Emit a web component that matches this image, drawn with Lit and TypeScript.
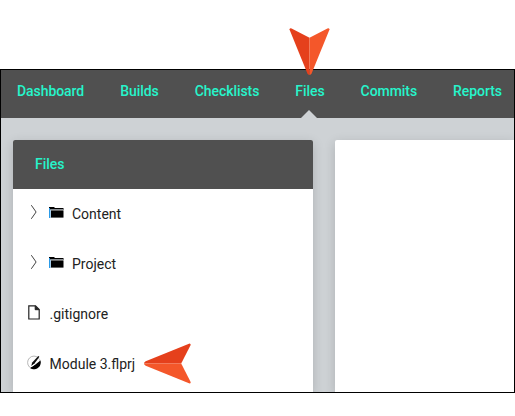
import { LitElement, html, css, svg, nothing } from "lit";
import { customElement } from "lit/decorators.js";

const TABS = ["Dashboard", "Builds", "Checklists", "Files", "Commits", "Reports"];

const ROWS = [
  { name: "Content", kind: "folder" },
  { name: "Project", kind: "folder" },
  { name: ".gitignore", kind: "file" },
  { name: "Module 3.flprj", kind: "project" },
];

const chevron = html`<svg class="chevron" width="8" height="16" viewBox="0 0 8 16">
  <path d="M1.3 1.2 L6.1 8 L1.3 14.8" fill="none" stroke="#444" stroke-width="1" />
</svg>`;

const icons: Record<string, unknown> = {
  folder: html`<svg class="folder" width="15" height="11" viewBox="0 0 15 11">
    <path d="M0 0H5L6 1H14.5V3H0Z" fill="#000" />
    <path d="M1.5 2.5H14.5" stroke="#8a8f94" stroke-width="1" />
    <rect x="0" y="1" width="1" height="10" fill="#2b9be8" />
    <rect x="1" y="2.5" width="1" height="8.5" fill="#a8cdea" />
    <rect x="2" y="3.4" width="12.5" height="7.2" fill="#000" />
  </svg>`,
  file: html`<svg class="file" width="12" height="15" viewBox="0 0 12 15">
    <path d="M0.8 0.8H7.5L11.2 4.5V14H0.8Z" fill="none" stroke="#222" stroke-width="1.2" />
    <path d="M7.2 0.8V4.7H11.2" fill="#222" stroke="#222" stroke-width="1" />
  </svg>`,
  project: html`<svg class="project" width="14" height="15" viewBox="0 0 14 15">
    <circle cx="7" cy="7.5" r="6.4" fill="#fff" stroke="#999" stroke-width="0.7" />
    <path d="M13.4 5.6A6.7 6.7 0 0 1 3 12.9L8.4 9.4Z" fill="#000" />
    <path d="M4.2 10.9L5.2 7.6L11.3 0.9L12.4 1.8L7.6 8.6Z" fill="#111" />
    <path d="M3.4 12.2L7.9 9.2L12.9 3.2" fill="none" stroke="#fff" stroke-width="0.9" />
  </svg>`,
};

const pointer = svg`
  <path d="M0.5 1.4Q0.9 -0.2 2.6 0.6L20.5 9.8V47Q19 47 18.3 45.3Z" fill="#e5401c" />
  <path d="M40.5 1.4Q40.1 -0.2 38.4 0.6L20.5 9.8V47Q22 47 22.7 45.3Z" fill="#f4572a" />`;

@customElement("app-root")
export class AppRoot extends LitElement {
  static styles = css`
    :host {
      display: block;
      position: relative;
      box-sizing: border-box;
      width: 515px;
      height: 416px;
      padding-top: 69px;
      background: #fff;
      font: 400 14px/20px Roboto, sans-serif;
      color: #222;
      overflow: hidden;
    }
    svg { display: block; flex: none; }
    .frame {
      box-sizing: border-box;
      height: 324px;
      border: 1px solid #000;
      background: #ced2d5;
      overflow: hidden;
      display: flex;
      flex-direction: column;
    }
    .nav {
      flex: none;
      display: flex;
      gap: 36px;
      height: 48px;
      padding-left: 16px;
      background: #505050;
      color: #26f5cb;
      font-weight: 500;
      letter-spacing: -0.06px;
    }
    .tab { position: relative; line-height: 42px; white-space: nowrap; }
    .active::after {
      content: "";
      position: absolute;
      left: 50%;
      bottom: 0;
      margin-left: -8.5px;
      border: 8.5px solid transparent;
      border-top: 0;
      border-bottom-color: #ced2d5;
    }
    .body {
      flex: 1;
      display: grid;
      grid-template-columns: 300px 1fr;
      gap: 22px;
      padding: 22px 0 0 12px;
    }
    .card {
      background: #fff;
      border-radius: 2px 2px 0 0;
      box-shadow: 0 3px 12px rgba(0, 0, 0, 0.16);
      overflow: hidden;
    }
    .viewer { border-radius: 2px 0 0 0; }
    .title {
      height: 49px;
      line-height: 48px;
      padding-left: 22px;
      background: #505050;
      color: #26f5cb;
      font-weight: 500;
    }
    .row {
      display: flex;
      align-items: center;
      height: 50px;
      padding-left: 14px;
    }
    .chevron { margin: 0 11px 4px 3px; }
    .folder { margin: 0 8px 4px 0; }
    .file { margin: 0 9.5px 4px 1px; }
    .project { margin: 0 8.6px 3px 0; }
    .pointer { position: absolute; }
    .down { left: 289px; top: 28px; }
    .left { left: 143px; top: 343px; }
  `;

  render() {
    return html`
      <div class="frame">
        <nav class="nav">
          ${TABS.map((t) => html`<span class="tab ${t === "Files" ? "active" : ""}">${t}</span>`)}
        </nav>
        <main class="body">
          <section class="card">
            <div class="title">Files</div>
            ${ROWS.map(
              (r) => html`<div class="row">
                ${r.kind === "folder" ? chevron : nothing}${icons[r.kind]}<span>${r.name}</span>
              </div>`
            )}
          </section>
          <section class="card viewer"></section>
        </main>
      </div>
      <svg class="pointer down" width="41" height="48" viewBox="0 0 41 48">${pointer}</svg>
      <svg class="pointer left" width="48" height="41" viewBox="0 0 48 41">
        <g transform="matrix(0 1 -1 0 48 0)">${pointer}</g>
      </svg>
    `;
  }
}
